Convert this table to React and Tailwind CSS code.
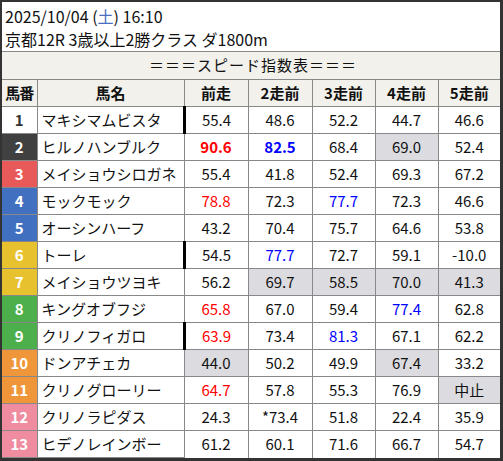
import React from 'react';

const rows = [
  { no: 1, bg: 'bg-white', fg: 'text-[#333]', name: 'マキシマムビスタ', bar: true, v: ['55.4', '48.6', '52.2', '44.7', '46.6'] },
  { no: 2, bg: 'bg-[#404040]', fg: 'text-white', name: 'ヒルノハンブルク', v: [{ t: '90.6', c: 'r', b: true }, { t: '82.5', c: 'b', b: true }, '68.4', { t: '69.0', g: true }, '52.4'] },
  { no: 3, bg: 'bg-[#e85a5a]', fg: 'text-white', name: 'メイショウシロガネ', v: ['55.4', '41.8', '52.4', '69.3', '67.2'] },
  { no: 4, bg: 'bg-[#4270c0]', fg: 'text-white', name: 'モックモック', v: [{ t: '78.8', c: 'r' }, '72.3', { t: '77.7', c: 'b' }, '72.3', '46.6'] },
  { no: 5, bg: 'bg-[#4270c0]', fg: 'text-white', name: 'オーシンハーフ', v: ['43.2', '70.4', '75.7', '64.6', '53.8'] },
  { no: 6, bg: 'bg-[#e8c22e]', fg: 'text-white', name: 'トーレ', bar: true, v: ['54.5', { t: '77.7', c: 'b' }, '72.7', '59.1', '-10.0'] },
  { no: 7, bg: 'bg-[#e8c22e]', fg: 'text-white', name: 'メイショウツヨキ', v: ['56.2', { t: '69.7', g: true }, { t: '58.5', g: true }, { t: '70.0', g: true }, { t: '41.3', g: true }] },
  { no: 8, bg: 'bg-[#4caf4c]', fg: 'text-white', name: 'キングオブフジ', v: [{ t: '65.8', c: 'r' }, '67.0', '59.4', { t: '77.4', c: 'b' }, '62.8'] },
  { no: 9, bg: 'bg-[#4caf4c]', fg: 'text-white', name: 'クリノフィガロ', bar: true, v: [{ t: '63.9', c: 'r' }, '73.4', { t: '81.3', c: 'b' }, '67.1', '62.2'] },
  { no: 10, bg: 'bg-[#f0963a]', fg: 'text-white', name: 'ドンアチェカ', v: [{ t: '44.0', g: true }, '50.2', '49.9', { t: '67.4', g: true }, '33.2'] },
  { no: 11, bg: 'bg-[#f0963a]', fg: 'text-white', name: 'クリノグローリー', v: [{ t: '64.7', c: 'r' }, '57.8', '55.3', '76.9', { t: '中止', g: true }] },
  { no: 12, bg: 'bg-[#f08ca0]', fg: 'text-white', name: 'クリノラピダス', v: ['24.3', '*73.4', '51.8', '22.4', '35.9'] },
  { no: 13, bg: 'bg-[#f08ca0]', fg: 'text-white', name: 'ヒデノレインボー', v: ['61.2', '60.1', '71.6', '66.7', '54.7'] },
];

const heads = ['前走', '2走前', '3走前', '4走前', '5走前'];

export default function App() {
  return (
    <div
      className="w-[503px] h-[461px] bg-white border-[#333] border-t-2 border-l-2 border-r-[3px] border-b-[3px] flex flex-col text-[#111]"
      style={{ fontFamily: '"Noto Sans CJK JP", "Noto Sans", sans-serif' }}
    >
      {/* title */}
      <div className="h-[51px] px-[3px] pt-[3px] text-[16px] leading-[23px]">
        <div>
          2025/10/04 (<span className="text-[#4a6fc0]">土</span>) 16:10
        </div>
        <div>京都12R 3歳以上2勝クラス ダ1800m</div>
      </div>

      <table className="border-collapse table-fixed w-full text-[15px]">
        <colgroup>
          <col className="w-[35px]" />
          <col className="w-[147px]" />
          <col className="w-[64px]" />
          <col className="w-[64px]" />
          <col className="w-[63px]" />
          <col className="w-[63px]" />
          <col />
        </colgroup>
        <thead>
          <tr className="h-[28px] bg-[#f2f1ec]">
            <td colSpan={7} className="border-t border-b border-[#888] text-center tracking-[1px] pl-[4px]">
              ＝＝＝スピード指数表＝＝＝
            </td>
          </tr>
          <tr className="h-[27px] bg-[#f2f1ec] font-bold">
            <td className="border border-l-0 border-[#888] text-center text-[15px] tracking-[-1px] whitespace-nowrap">馬番</td>
            <td className="border border-[#888] text-center">馬名</td>
            {heads.map((h) => (
              <td key={h} className="border border-[#888] text-center last:border-r-0">{h}</td>
            ))}
          </tr>
        </thead>
        <tbody>
          {rows.map((r) => (
            <tr key={r.no} className="h-[27px]">
              <td className={`border border-l-0 border-[#888] text-center font-bold ${r.bg} ${r.fg}`}>{r.no}</td>
              <td className="border border-[#888] pl-[4px] whitespace-nowrap overflow-hidden">{r.name}</td>
              {r.v.map((c, i) => {
                const cell = typeof c === 'string' ? { t: c } : c;
                const color = cell.c === 'r' ? 'text-[#ff0000]' : cell.c === 'b' ? 'text-[#0000ff]' : '';
                return (
                  <td
                    key={i}
                    className={`border border-[#888] text-center ${i === 4 ? 'border-r-0' : ''} ${
                      i === 0 && r.bar ? 'border-l-[3px] border-l-black' : ''
                    } ${cell.g ? 'bg-[#dcdce0]' : ''} ${color} ${cell.b ? 'font-bold' : ''} ${r.no === 13 ? 'border-b-0' : ''}`}
                  >
                    {cell.t}
                  </td>
                );
              })}
            </tr>
          ))}
        </tbody>
      </table>
    </div>
  );
}
